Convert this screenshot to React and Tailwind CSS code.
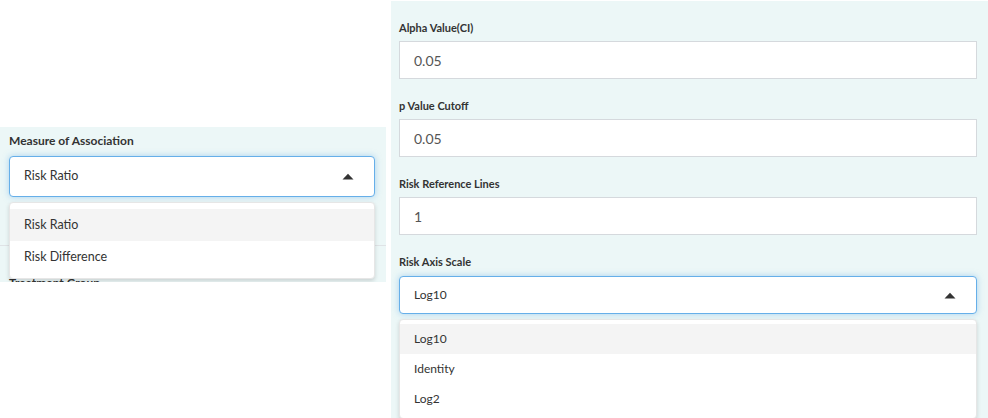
import React from 'react';

const FONT = { fontFamily: 'Lato, "Noto Sans", sans-serif' };

function Caret() {
  return (
    <svg width="12" height="7" viewBox="0 0 12 7" className="shrink-0">
      <path d="M0.5 6.5 L6 0.8 L11.5 6.5 Z" fill="#333" />
    </svg>
  );
}

function Field({ label, value }) {
  return (
    <div className="mb-[20px]">
      <div className="text-[11px] font-bold text-[#333] h-[14px] leading-[14px] mb-[6px]">{label}</div>
      <div className="h-[38px] border border-[#d5d9dd] bg-white flex items-center px-[14px] text-[14px] text-[#555]">
        {value}
      </div>
    </div>
  );
}

function OpenSelect({ value, options, height, textSize, rowH, menuPad }) {
  return (
    <div className="relative">
      <div
        className={`${height} border border-[#66afe9] rounded-[4px] bg-white flex items-center justify-between pl-[14px] pr-[20px] ${textSize} text-[#333] shadow-[0_0_6px_rgba(102,175,233,0.5)]`}
      >
        <span>{value}</span>
        <Caret />
      </div>
      <div className={`absolute left-0 right-0 top-[calc(100%+5px)] z-10 bg-white rounded-[4px] border border-[#e6e6e6] shadow-[0_2px_4px_rgba(0,0,0,0.15)] ${menuPad}`}>
        {options.map((o, i) => (
          <div
            key={o}
            className={`flex items-center px-[14px] ${textSize} text-[#333] ${rowH} ${i === 0 ? 'bg-[#f4f4f4]' : ''}`}
          >
            {o}
          </div>
        ))}
      </div>
    </div>
  );
}

export default function App() {
  return (
    <div className="w-[988px] h-[418px] bg-white flex overflow-hidden" style={FONT}>
      <div className="w-[386px] mt-[127px] h-[155px] bg-[#ecf7f7] overflow-hidden shrink-0">
        <div className="pt-[6px] px-[9px] pr-[11px]">
          <div className="text-[12px] font-bold text-[#333] h-[16px] leading-[16px] mb-[7px]">Measure of Association</div>
          <OpenSelect
            value="Risk Ratio"
            options={['Risk Ratio', 'Risk Difference']}
            height="h-[41px]"
            textSize="text-[12.5px]"
            rowH="h-[32px]"
            menuPad="pt-[6px] pb-[5px]"
          />
        </div>
        <div className="mt-[48px] border-t border-[#dfe3e6]" />
        <div className="pt-[28px] px-[9px] text-[12px] font-bold text-[#333]">Treatment Group</div>
      </div>
      <div className="ml-[5px] flex-1 bg-[#ecf7f7] mt-[1px] pt-[20px] pl-[8px] pr-[11px]">
        <Field label="Alpha Value(CI)" value="0.05" />
        <Field label="p Value Cutoff" value="0.05" />
        <Field label="Risk Reference Lines" value="1" />
        <div className="text-[11px] font-bold text-[#333] h-[14px] leading-[14px] mb-[7px]">Risk Axis Scale</div>
        <OpenSelect
          value="Log10"
          options={['Log10', 'Identity', 'Log2']}
          height="h-[38px]"
          textSize="text-[12px]"
          rowH="h-[30px]"
          menuPad="py-[4px]"
        />
      </div>
    </div>
  );
}
